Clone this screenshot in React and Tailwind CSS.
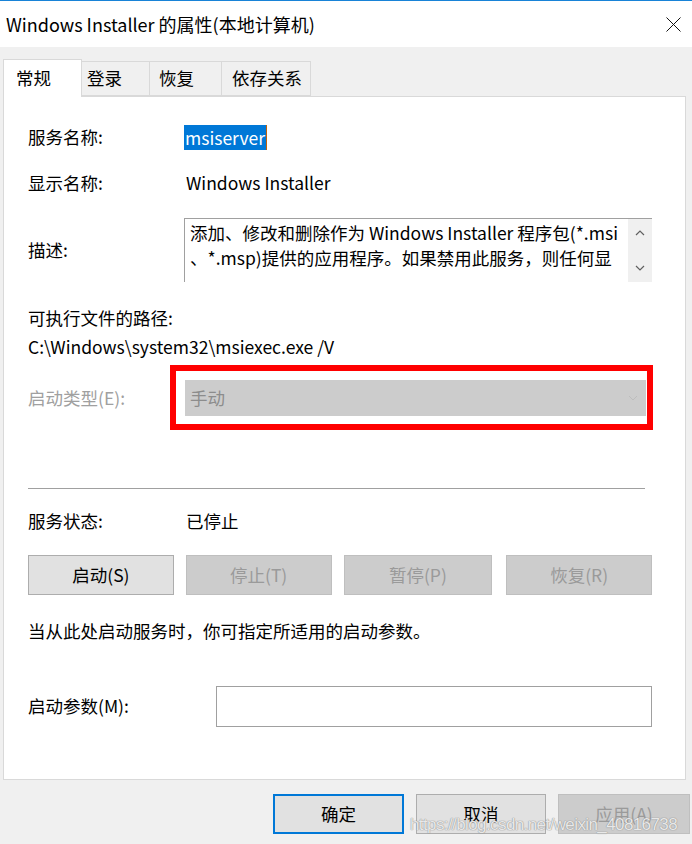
import React from 'react'

const font = { fontFamily: '"Noto Sans CJK SC", "Liberation Sans", sans-serif' }

function Row({ label, children, className = '' }) {
  return (
    <div className={`flex items-center h-[24px] ${className}`}>
      <div className="w-[158px] shrink-0">{label}</div>
      {children}
    </div>
  )
}

function Btn({ children, disabled, primary, className = '' }) {
  return (
    <div
      className={`flex items-center justify-center border text-[17.5px] ${
        disabled
          ? 'bg-[#cccccc] border-[#bfbfbf] text-[#9a9a9a]'
          : primary
          ? 'bg-[#e1e1e1] border-[#0078d7] border-2 text-black'
          : 'bg-[#e1e1e1] border-[#adadad] text-black'
      } ${className}`}
    >
      {children}
    </div>
  )
}

export default function App() {
  return (
    <div className="w-[692px] h-[844px] bg-[#f0f0f0] overflow-hidden relative text-black text-[17.5px]" style={font}>
      {/* title bar */}
      <div className="h-[47px] bg-white border-t border-[#1883d7] flex items-center justify-between pl-[6px] pr-[11px]">
        <div className="text-[18px] leading-none">Windows Installer 的属性(本地计算机)</div>
        <svg width="15" height="15" viewBox="0 0 15 15" className="mt-[1px]">
          <path d="M0.5 0.5 L14.5 14.5 M14.5 0.5 L0.5 14.5" stroke="#111" strokeWidth="1" fill="none" />
        </svg>
      </div>

      {/* tabs */}
      <div className="flex items-end pl-[3px] pt-[12px] -mb-[1px] relative z-10">
        <div className="w-[79px] h-[38px] bg-white border border-b-0 border-[#d9d9d9] flex items-center pl-[12px]">常规</div>
        <div className="w-[68px] h-[35px] border border-l-0 border-[#d9d9d9] bg-[#f0f0f0] flex items-center pl-[5px] mb-[1px]">登录</div>
        <div className="w-[72px] h-[35px] border border-l-0 border-[#d9d9d9] bg-[#f0f0f0] flex items-center pl-[9px] mb-[1px]">恢复</div>
        <div className="w-[89px] h-[35px] border border-l-0 border-[#d9d9d9] bg-[#f0f0f0] flex items-center pl-[10px] mb-[1px]">依存关系</div>
      </div>

      {/* panel */}
      <div className="ml-[3px] w-[683px] h-[684px] bg-white border border-[#d9d9d9] pl-[24px] pr-[33px] pt-[28px]">
        <Row label="服务名称:">
          <span className="bg-[#0078d7] text-white h-[25px] px-[1px] leading-[25px] border-r border-[#c0600a] -ml-[2px]">msiserver</span>
        </Row>
        <Row label="显示名称:" className="mt-[22px]">
          <span>Windows Installer</span>
        </Row>

        <div className="flex items-center mt-[23px] h-[64px]">
          <div className="w-[156px] shrink-0">描述:</div>
          <div className="flex h-[64px] w-[468px] border-t border-l border-[#a0a0a0]">
            <div className="flex-1 pl-[5px] pt-[1px] leading-[25px] overflow-hidden whitespace-nowrap">
              <div>添加、修改和删除作为 Windows Installer 程序包(*.msi</div>
              <div>、*.msp)提供的应用程序。如果禁用此服务，则任何显</div>
            </div>
            <div className="w-[24px] bg-[#f0f0f0] flex flex-col items-center justify-between py-[11px]">
              <svg width="10" height="6" viewBox="0 0 10 6"><path d="M1 5 L5 1 L9 5" stroke="#606060" strokeWidth="1.2" fill="none" /></svg>
              <svg width="10" height="6" viewBox="0 0 10 6"><path d="M1 1 L5 5 L9 1" stroke="#606060" strokeWidth="1.2" fill="none" /></svg>
            </div>
          </div>
        </div>

        <div className="mt-[24px] h-[24px] leading-[24px]">可执行文件的路径:</div>
        <div className="mt-[5px] h-[24px] leading-[24px]">C:\Windows\system32\msiexec.exe /V</div>

        <div className="flex items-center mt-[21px] h-[36px]">
          <div className="w-[157px] shrink-0 text-[#a0a0a0]">启动类型(E):</div>
          <div className="relative w-[461px] h-[36px] bg-[#cccccc] flex items-center justify-between pl-[5px] pr-[8px] text-[#8c8c8c]">
            <span>手动</span>
            <svg width="10" height="6" viewBox="0 0 10 6"><path d="M1 1 L5 5 L9 1" stroke="#bdbdbd" strokeWidth="1" fill="none" /></svg>
            <div className="absolute -left-[15px] -top-[15px] -right-[7px] -bottom-[14px] border-[6px] border-[#ff0000]"></div>
          </div>
        </div>

        <div className="mt-[72px] h-px bg-[#a0a0a0] mr-[7px]"></div>

        <Row label="服务状态:" className="mt-[20px]">
          <span>已停止</span>
        </Row>

        <div className="flex mt-[22px] h-[40px] gap-[12px]">
          <Btn className="w-[146px]">启动(S)</Btn>
          <Btn disabled className="w-[146px]">停止(T)</Btn>
          <Btn disabled className="w-[149px]">暂停(P)</Btn>
          <Btn disabled className="w-[146px] ml-[2px]">恢复(R)</Btn>
        </div>

        <div className="mt-[24px] h-[24px] leading-[24px]">当从此处启动服务时，你可指定所适用的启动参数。</div>

        <div className="flex items-center mt-[43px] h-[41px]">
          <div className="w-[188px] shrink-0">启动参数(M):</div>
          <div className="w-[437px] h-[41px] border border-[#a0a0a0] bg-white"></div>
        </div>
      </div>

      {/* bottom buttons */}
      <div className="flex justify-end gap-[12px] mt-[14px] pr-[2px]">
        <Btn primary className="w-[131px] h-[40px]">确定</Btn>
        <Btn className="w-[130px] h-[40px]">取消</Btn>
        <Btn disabled className="w-[132px] h-[40px]">应用(A)</Btn>
      </div>

      {/* watermark */}
      <div
        className="absolute left-[410px] top-[813px] text-[17px] leading-[24px] text-white/80 tracking-[-0.6px]"
        style={{ fontFamily: '"Liberation Sans", sans-serif', textShadow: '0 0 1px #8a8a8a, 0 0 1px #8a8a8a' }}
      >
        https://blog.csdn.net/weixin_40816738
      </div>
    </div>
  )
}
